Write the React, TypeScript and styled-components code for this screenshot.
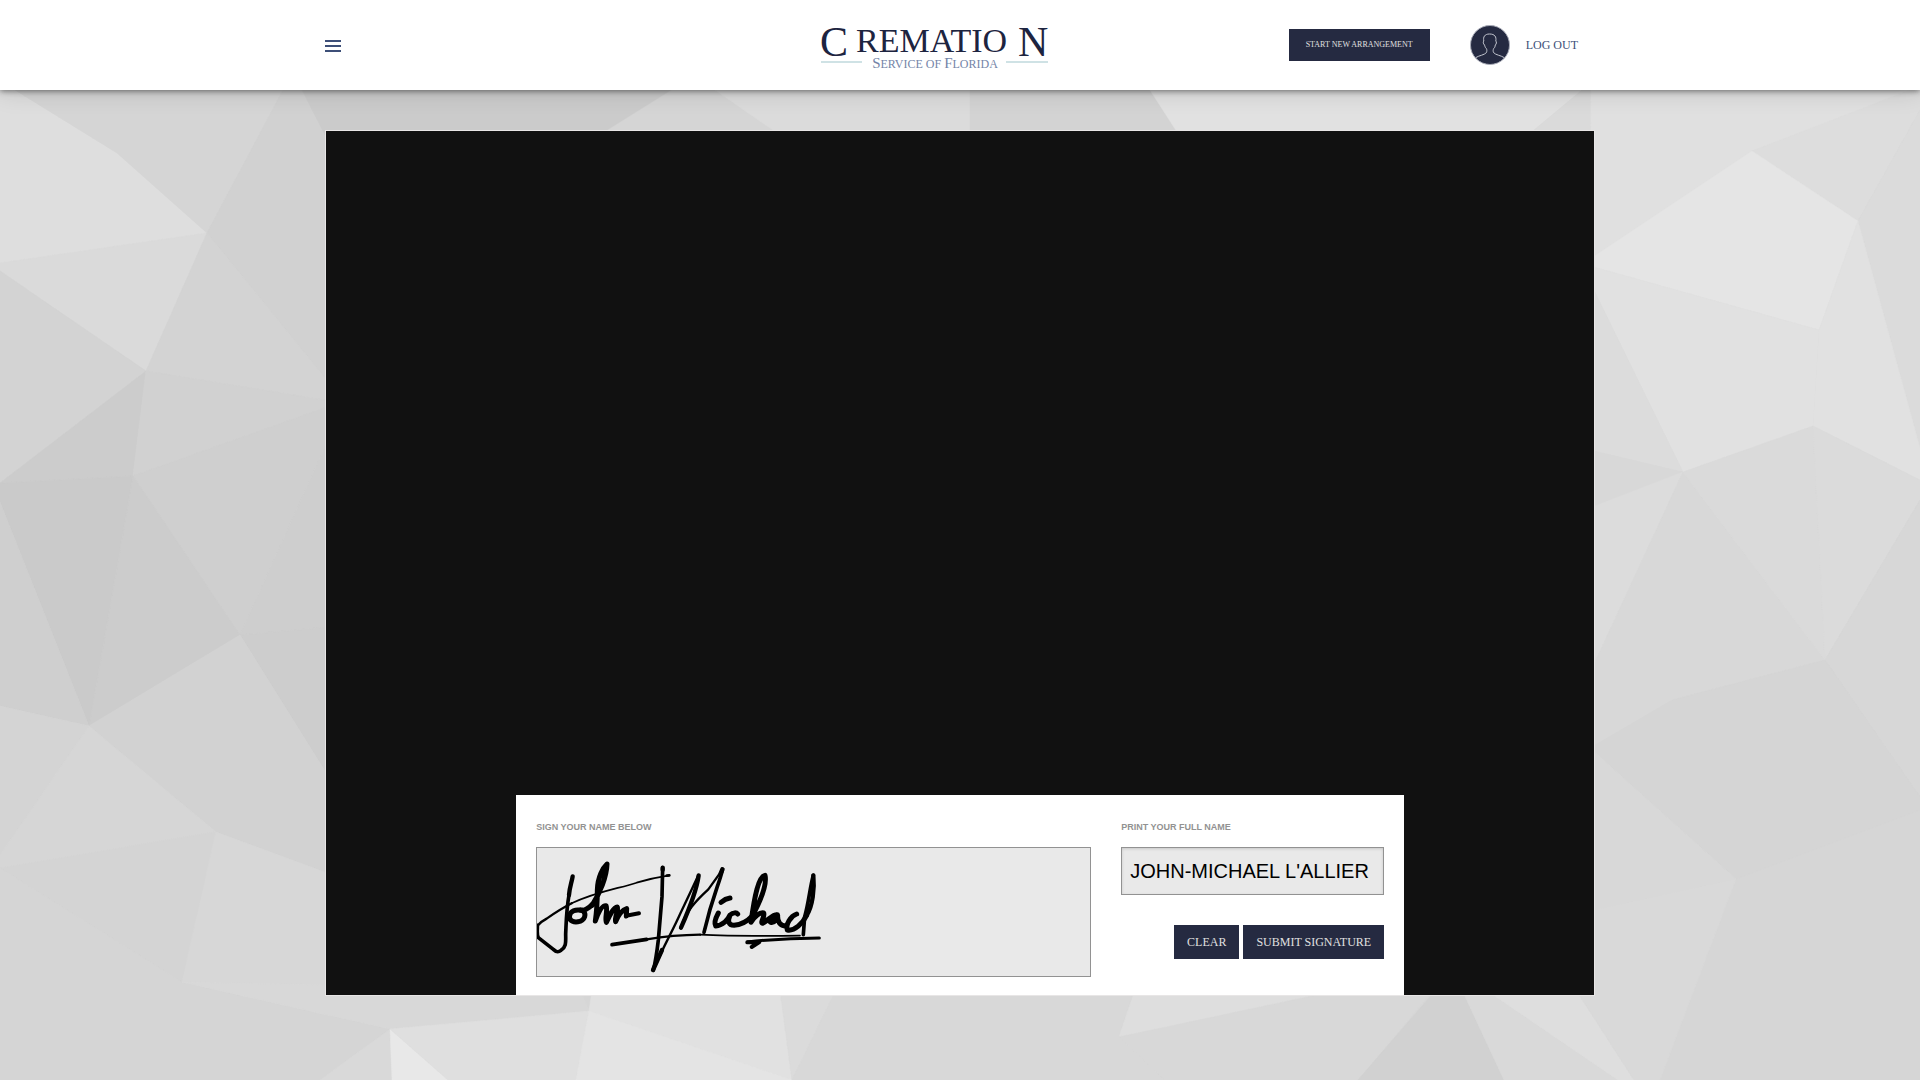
import React, { useState } from "react";
import styled, { createGlobalStyle } from "styled-components";

const serif = `"Liberation Serif", "Times New Roman", serif`;
const sans = `"Liberation Sans", Arial, sans-serif`;
const navy = "#252a41";
const slate = "#3d4f78";

const GlobalStyle = createGlobalStyle`
  *, *::before, *::after { box-sizing: border-box; }
  body { margin: 0; background: #d6d6d6; font-family: ${serif}; }
`;

const Page = styled.div`
  display: grid;
  min-height: 100vh;
  overflow: hidden;
`;

const Backdrop = styled.svg`
  grid-area: 1 / 1;
  width: 100%;
  height: 100%;
  min-height: 0;
`;

const Content = styled.div`
  grid-area: 1 / 1;
  z-index: 1;
  display: flex;
  flex-direction: column;
  align-items: center;
  gap: 40px;
`;

const Header = styled.header`
  align-self: stretch;
  display: flex;
  justify-content: center;
  background: #fff;
  box-shadow: 0 1px 6px rgba(0, 0, 0, 0.5), 0 0 24px rgba(0, 0, 0, 0.16);
`;

const HeaderInner = styled.div`
  display: grid;
  grid-template-columns: 39% auto 1fr;
  align-items: center;
  width: calc(100% - 40px);
  max-width: 1270px;
  height: 90px;
`;

const MenuButton = styled.button`
  display: flex;
  flex-direction: column;
  gap: 3px;
  width: 16px;
  padding: 2px 0 0;
  border: 0;
  background: none;
  cursor: pointer;
`;

const MenuLine = styled.span`
  height: 2px;
  background: ${slate};
`;

const LogoLink = styled.a`
  display: block;
  line-height: 0;
`;

const Actions = styled.div`
  display: flex;
  align-items: center;
  justify-content: flex-end;
  padding-right: 17px;
`;

const Button = styled.button<{ $small?: boolean }>`
  height: ${(p) => (p.$small ? 32 : 34)}px;
  padding: ${(p) => (p.$small ? "0 17px 2px" : "0 13px")};
  border: 0;
  background: ${navy};
  color: #e0e0e0;
  font: ${(p) => (p.$small ? 8 : 12)}px ${serif};
  text-transform: uppercase;
  white-space: nowrap;
  cursor: pointer;
`;

const Avatar = styled.svg`
  margin: 0 16px 0 40px;
`;

const LogOut = styled.a`
  color: ${slate};
  font-size: 12px;
  text-decoration: none;
  text-transform: uppercase;
`;

const Stage = styled.main`
  display: flex;
  flex-direction: column;
  align-items: center;
  justify-content: flex-end;
  width: calc(100% - 40px);
  max-width: 1270px;
  min-height: calc(100vh - 214px);
  margin-bottom: 84px;
  border: 1px solid #e8e6e6;
  background: #111;
`;

const SignPanel = styled.form`
  display: grid;
  grid-template-columns: 1fr 263px;
  gap: 30px;
  width: 70%;
  min-width: 640px;
  padding: 20px 20px 18px;
  background: #fff;
`;

const Field = styled.div`
  display: flex;
  flex-direction: column;
`;

const Label = styled.label`
  margin-bottom: 8px;
  color: #929292;
  font: bold 9px/24px ${sans};
  text-transform: uppercase;
`;

const SignaturePad = styled.div`
  height: 130px;
  border: 1px solid #929292;
  background: #e9e9e9;
  overflow: hidden;
`;

const NameInput = styled.input`
  width: 100%;
  height: 48px;
  padding: 0 8px;
  border: 1px solid #929292;
  border-radius: 0;
  outline: 0;
  background: #e9e9e9;
  box-shadow: inset 0 1px 3px rgba(0, 0, 0, 0.15);
  color: #000;
  font: 20px ${sans};
`;

const ButtonRow = styled.div`
  display: flex;
  justify-content: flex-end;
  gap: 4px;
  margin-top: 30px;
`;

const facets: [string, string][] = [
  ["0,90 15,90 117,153 207,233 0,263", "#dedede"],
  ["15,90 283,90 207,233 117,153", "#d5d5d5"],
  ["283,90 207,233 325,378 600,378 600,90", "#d1d1d1"],
  ["302,90 672,90 600,135 325,135", "#cbcbcb"],
  ["0,263 207,233 146,371 0,271", "#dadada"],
  ["207,233 330,384 330,401 146,371", "#d3d3d3"],
  ["0,271 146,371 0,483", "#d3d3d3"],
  ["146,371 133,476 0,483", "#cccccc"],
  ["146,371 330,401 330,406 133,476", "#d1d1d1"],
  ["133,476 330,406 330,436 240,635", "#cfcfcf"],
  ["330,436 330,627 240,635", "#cecece"],
  ["133,476 240,635 89,726", "#cccccc"],
  ["133,476 89,726 0,502 0,483", "#cacaca"],
  ["0,502 89,726 0,706", "#cfcfcf"],
  ["240,635 330,627 330,779", "#cdcdcd"],
  ["240,635 330,779 330,874 216,832 89,726", "#d2d2d2"],
  ["89,726 0,706 0,855", "#d4d4d4"],
  ["89,726 216,832 0,868 0,855", "#d6d6d6"],
  ["216,832 182,982 0,868", "#d4d4d4"],
  ["0,868 182,982 390,1029 320,1080 0,1080", "#d5d5d5"],
  ["216,832 330,874 330,1016 182,982", "#d7d7d7"],
  ["182,982 330,985 580,990 589,1011 390,1029", "#d8d8d8"],
  ["390,1029 320,1080 392,1080", "#d9d9d9"],
  ["390,1029 392,1080 448,1080", "#e8e8e8"],
  ["390,1029 589,1011 576,1080 448,1080", "#dfdfdf"],
  ["589,1011 592,990 780,990 792,1080", "#e1e1e1"],
  ["589,1011 792,1080 576,1080", "#e4e4e4"],
  ["780,990 836,990 792,1080", "#dbdbdb"],
  ["836,990 1134,990 1119,1037 1165,1080 792,1080", "#d8d8d8"],
  ["1135,990 1119,1037 1340,990", "#dedede"],
  ["1340,990 1119,1037 1165,1080 1358,1080 1433,990", "#d8d8d8"],
  ["1436,990 1358,1080 1504,1080 1462,990", "#d1d1d1"],
  ["1462,990 1504,1080 1618,1080 1486,990", "#d9d9d9"],
  ["1486,990 1618,1080 1634,1080 1576,990", "#dedede"],
  ["672,90 718,90 780,135 600,135", "#d5d5d5"],
  ["715,90 970,90 970,135 780,135", "#dbdbdb"],
  ["970,90 1150,90 1179,135 970,135", "#d3d3d3"],
  ["1150,90 1582,90 1528,135 1179,135", "#e1e1e1"],
  ["1582,90 1591,90 1590,135 1528,135", "#dadada"],
  ["1591,90 1920,90 1752,151 1590,259", "#e0e0e0"],
  ["1910,90 1920,90 1920,110 1858,221 1752,151", "#dddddd"],
  ["1920,110 1920,448 1858,221", "#dbdbdb"],
  ["1590,259 1752,151 1858,221 1819,330 1590,266", "#e5e5e5"],
  ["1590,266 1819,330 1813,426 1683,472 1590,282", "#e1e1e1"],
  ["1858,221 1920,448 1920,480 1813,426 1819,330", "#e1e1e1"],
  ["1590,282 1683,472 1590,450", "#dcdcdc"],
  ["1590,450 1683,472 1590,508", "#d8d8d8"],
  ["1590,508 1683,472 1590,673", "#dcdcdc"],
  ["1683,472 1825,660 1672,700 1590,760 1590,673", "#d8d8d8"],
  ["1683,472 1813,426 1825,660", "#dadada"],
  ["1813,426 1920,480 1920,500 1825,660", "#dbdbdb"],
  ["1825,660 1920,500 1920,797", "#d7d7d7"],
  ["1825,660 1920,797 1920,810 1736,879 1590,748 1672,700", "#d5d5d5"],
  ["1590,748 1736,879 1590,911", "#d8d8d8"],
  ["1590,911 1736,879 1660,1080 1634,1080 1576,990", "#d9d9d9"],
];

function FacetedBackdrop() {
  return (
    <Backdrop viewBox="0 0 1920 1080" preserveAspectRatio="xMidYMid slice" aria-hidden="true">
      <rect width="1920" height="1080" fill="#d6d6d6" />
      {facets.map(([points, fill]) => (
        <polygon key={points} points={points} fill={fill} stroke={fill} strokeWidth="0.5" />
      ))}
    </Backdrop>
  );
}

function Logo() {
  return (
    <svg width="230" height="56" viewBox="0 -6 230 56" role="img" aria-label="Cremation Service of Florida">
      <g fontFamily={serif} fill="#1d2440">
        <text y="33" fontSize="42">C</text>
        <text x="36" y="29" fontSize="34">REMATIO</text>
        <text x="198" y="33" fontSize="42">N</text>
      </g>
      <text x="115" y="45" fontSize="12" textAnchor="middle" fontFamily={serif} fill="#7485a8">
        <tspan fontSize="15">S</tspan>ERVICE OF <tspan fontSize="15">F</tspan>LORIDA
      </text>
      <path d="M1 39H42M186 39H228" stroke="#cfe2e5" strokeWidth="2" />
    </svg>
  );
}

function Signature() {
  return (
    <svg
      width="553"
      height="128"
      viewBox="111 204 1659 384"
      role="img"
      aria-label="Handwritten signature"
      fill="none"
      stroke="#000"
      strokeLinecap="round"
      strokeLinejoin="round"
    >
      <g strokeWidth="15">
        <path d="M218 289C215 308 209 320 207 345" strokeWidth="13" />
        <path d="M238 390C212 388 205 405 210 418C220 430 248 428 254 410C258 398 246 386 236 390C250 396 268 384 276 374" />
        <path d="M276 376C300 340 320 290 321 252C310 262 293 290 292 330C292 370 290 395 286 423C294 400 306 375 318 377C324 390 314 412 319 427C328 408 340 382 352 381C356 392 343 412 347 425C354 408 366 390 380 386L379 408" />
        <path d="M386 406L417 400" strokeWidth="12" />
        <path d="M663 367Q676 356 690 354" />
        <path d="M655 399C648 412 642 430 647 438C668 436 684 420 690 405C700 396 710 398 713 402M690 405C682 425 686 436 702 436C724 434 742 424 757 408" />
        <path d="M757 408C780 365 802 315 795 286C776 290 764 345 753 427C764 408 780 396 791 399C796 408 779 428 788 430C800 424 812 406 832 404C816 404 802 422 812 427C824 430 832 416 833 406C832 425 840 438 858 438" />
        <path d="M890 402C872 408 856 434 862 450C884 454 908 430 920 406" />
        <path d="M920 406C938 380 944 325 940 286" strokeWidth="13" />
      </g>
      <g strokeWidth="11">
        <path d="M207 345C199 390 199 420 197 462C197 485 200 500 183 511C174 518 168 516 160 508L115 473C109 462 113 448 112 436" />
        <path d="M488 263L486 350L475 480Q468 540 460 571" />
        <path d="M596 286C590 330 562 400 543 443" strokeWidth="13" />
        <path d="M668 268C655 320 640 340 612 457" />
        <path d="M940 286C930 320 926 370 914 410L910 464" />
        <path d="M742 486Q850 474 958 474" strokeWidth="9" />
        <path d="M742 487L778 486L755 501" strokeWidth="12" />
        <path d="M336 494L440 478" />
      </g>
      <g strokeWidth="7">
        <path d="M112 438Q124 424 140 416Q180 388 215 370" />
        <path d="M459 572C490 500 520 448 542 398Q570 340 594 288" />
        <path d="M459 570L486 510" strokeWidth="13" />
        <path d="M543 443C556 395 590 360 625 328Q645 300 668 268" />
        <path d="M440 478Q520 465 600 464" />
      </g>
      <path d="M215 370C290 334 360 325 410 308Q460 293 508 286M600 464Q700 469 900 467" strokeWidth="5" />
      <path d="M488 263V270M667 268L662 280" strokeWidth="13" />
      <path d="M500 287L508 286" strokeWidth="8" />
    </svg>
  );
}

export default function App() {
  const [name, setName] = useState("JOHN-MICHAEL L'ALLIER");
  const [signed, setSigned] = useState(true);

  return (
    <>
      <GlobalStyle />
      <Page>
        <FacetedBackdrop />
        <Content>
          <Header>
            <HeaderInner>
              <MenuButton type="button" aria-label="Open menu">
                <MenuLine />
                <MenuLine />
                <MenuLine />
              </MenuButton>
              <LogoLink href="#home">
                <Logo />
              </LogoLink>
              <Actions>
                <Button type="button" $small>
                  Start new arrangement
                </Button>
                <Avatar width="40" height="40" viewBox="0 0 40 40" aria-hidden="true">
                  <circle cx="20" cy="20" r="19.500" fill={navy} stroke="#a9acb8" strokeWidth="1" />
                  <path
                    d="M6 32.500C9 30.500 14.500 30 16.500 27.500C17 26 17 24.500 16.300 23.500C15 22.500 15 21 14.500 20C13 18.500 13 17 13.800 16C13 12 14.500 9 19.500 9C25 9 26.500 12 25.800 16C26.800 17 26.500 19 25.300 20C25 21.500 25 22.500 23.700 23.500C23 25 23 26 23.500 27.500C25.500 30 31 30.500 34 32.500"
                    fill="none"
                    stroke="#c3c6cf"
                    strokeWidth="1"
                  />
                </Avatar>
                <LogOut href="#logout">Log out</LogOut>
              </Actions>
            </HeaderInner>
          </Header>
          <Stage>
            <SignPanel onSubmit={(e) => e.preventDefault()}>
              <Field>
                <Label as="span">Sign your name below</Label>
                <SignaturePad>{signed && <Signature />}</SignaturePad>
              </Field>
              <Field>
                <Label htmlFor="full-name">Print your full name</Label>
                <NameInput id="full-name" type="text" value={name} onChange={(e) => setName(e.target.value)} />
                <ButtonRow>
                  <Button type="button" onClick={() => setSigned(false)}>
                    Clear
                  </Button>
                  <Button type="submit">Submit signature</Button>
                </ButtonRow>
              </Field>
            </SignPanel>
          </Stage>
        </Content>
      </Page>
    </>
  );
}
